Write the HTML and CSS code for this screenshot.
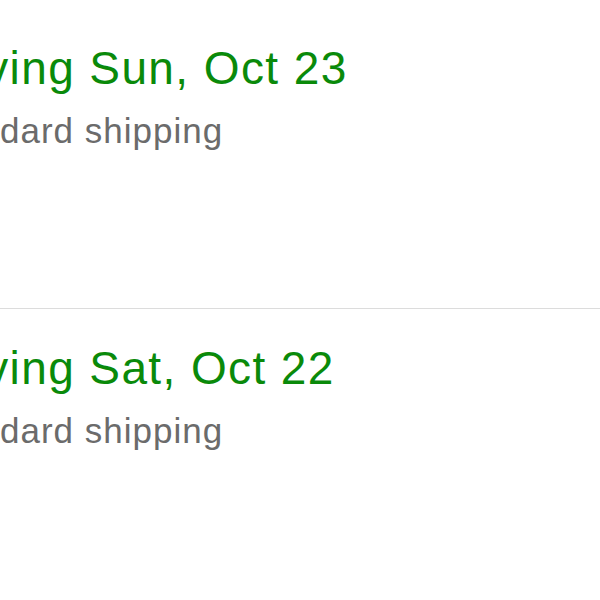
FILE: index.html
```html
<!DOCTYPE html>
<html>
<head>
<meta charset="utf-8">
<link rel="stylesheet" href="styles.css">
</head>
<body>
<div class="list">
  <div class="item">
    <div class="info">
      <div class="title">Arriving Sun, Oct 23</div>
      <div class="sub">Standard shipping</div>
    </div>
  </div>
  <div class="item">
    <div class="info">
      <div class="title">Arriving Sat, Oct 22</div>
      <div class="sub">Standard shipping</div>
    </div>
  </div>
</div>
</body>
</html>
```
FILE: styles.css
```css
html, body {
  margin: 0;
  padding: 0;
  background: #ffffff;
  overflow: hidden;
}
body {
  width: 600px;
  height: 600px;
  font-family: "Liberation Sans", Arial, sans-serif;
}
.list {
  display: flex;
  flex-direction: column;
  padding-top: 9px;
}
.item {
  height: 300px;
  box-sizing: border-box;
  border-bottom: 1px solid #dcdcdc;
  padding-top: 32px;
}
.info {
  white-space: nowrap;
}
.title {
  margin-left: -92px;
  color: #0a8a0a;
  font-size: 46px;
  line-height: 54px;
  letter-spacing: 1.4px;
}
.sub {
  margin-left: -76px;
  margin-top: 16px;
  color: #6b6b6b;
  font-size: 35px;
  line-height: 40px;
  letter-spacing: 1px;
}
```
